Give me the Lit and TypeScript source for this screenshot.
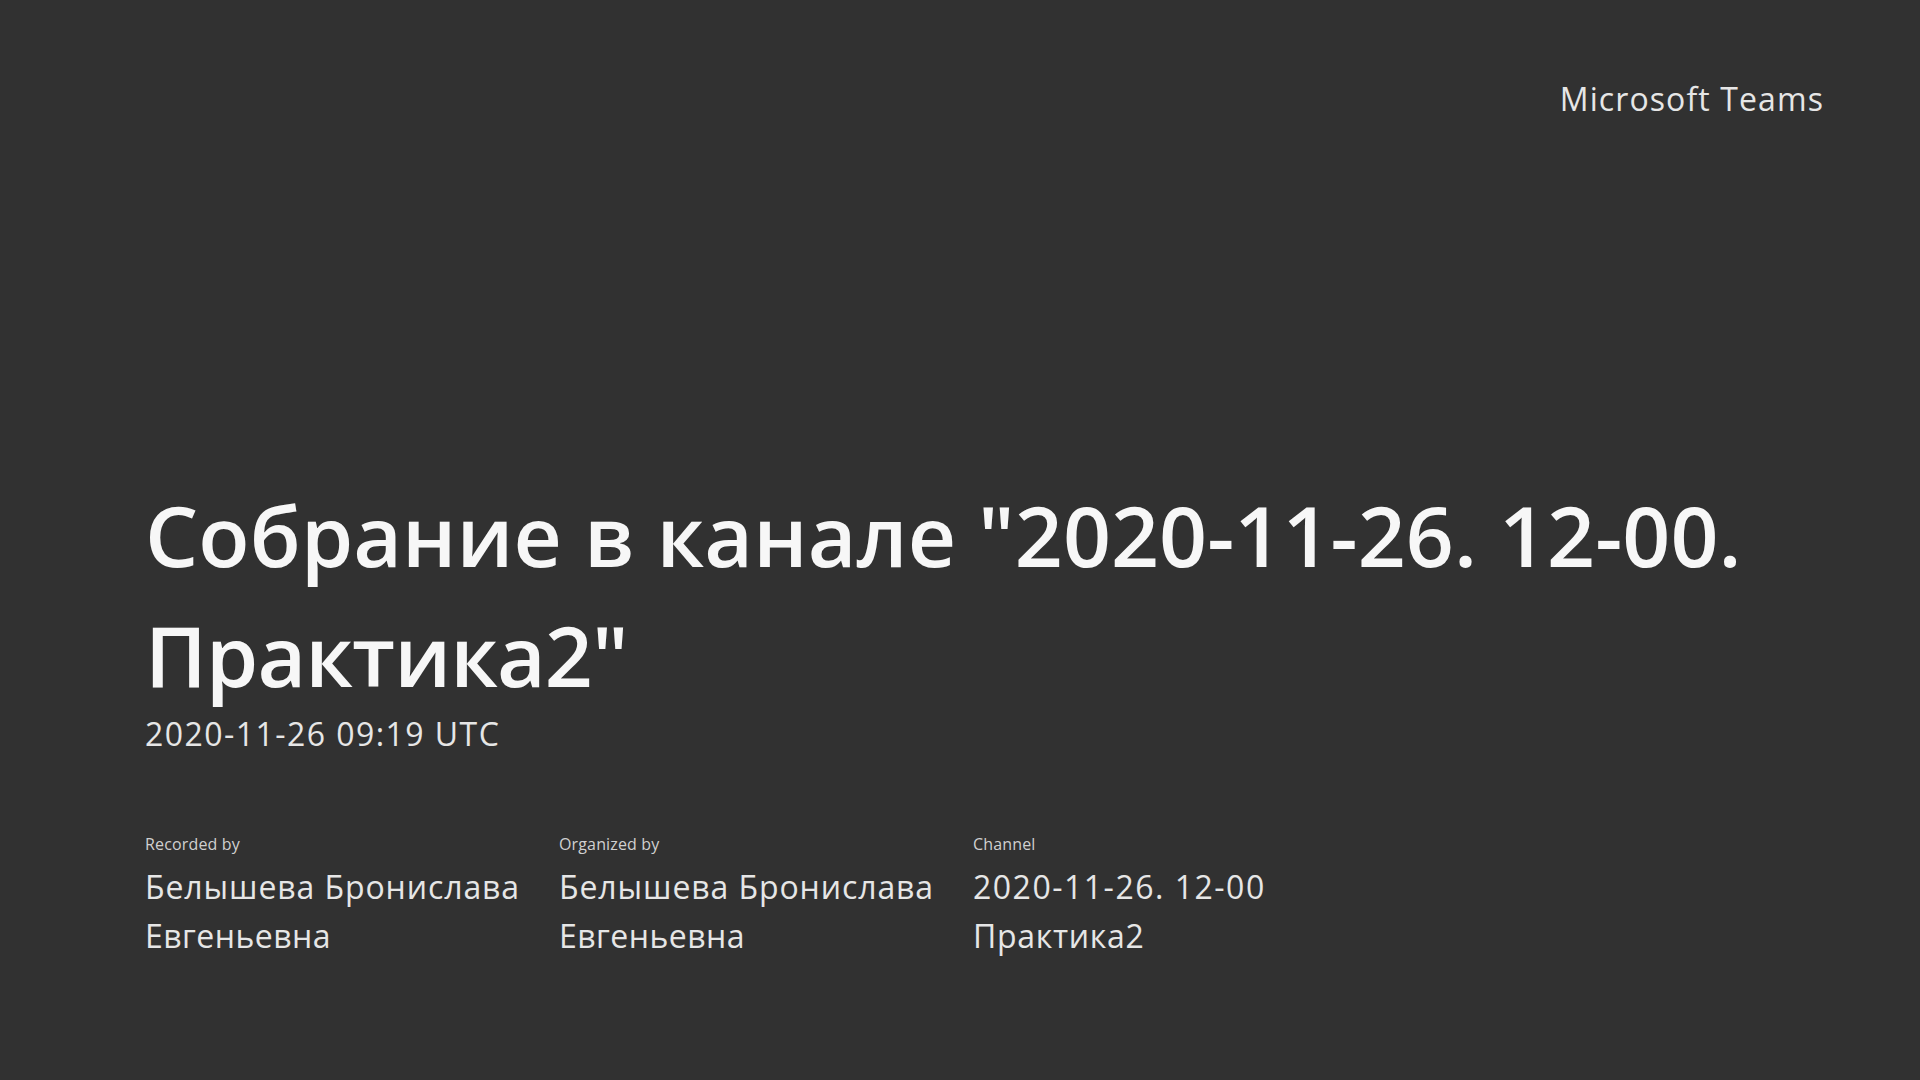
import { LitElement, html, css } from "lit";
import { customElement } from "lit/decorators.js";

const FAMILY = css`"Open Sans", "Noto Sans", sans-serif`;

@customElement("app-root")
export class AppRoot extends LitElement {
  static styles = css`
    :host {
      display: flex;
      flex-direction: column;
      justify-content: space-between;
      box-sizing: border-box;
      width: 1920px;
      height: 1080px;
      padding: 76px 96px 120px 145px;
      background: #313131;
      color: #f5f5f5;
      font-family: ${FAMILY};
      overflow: hidden;
    }
    .brand { align-self: flex-end; font-size: 32px; letter-spacing: 1.1px; line-height: 46px; color: #e6e6e6; }
    .main { display: flex; flex-direction: column; }
    h1 { margin: 0; font-size: 84px; font-weight: 600; letter-spacing: 0.09px; line-height: 120px; color: #f7f7f7; }
    .tail { letter-spacing: -0.9px; }
    .date { font-size: 32px; letter-spacing: 1.45px; line-height: 44px; color: #e6e6e6; margin-top: -3px; margin-bottom: 76px; }
    .meta { display: grid; grid-template-columns: repeat(3, 414px); }
    .cell { width: 384px; }
    .label { font-size: 16px; letter-spacing: 0.15px; line-height: 24px; color: #d0d0d0; margin-bottom: 6px; }
    .value { font-size: 32px; letter-spacing: 0.7px; line-height: 49px; color: #e6e6e6; }
    .wide { letter-spacing: 0.9px; }
    .narrow { letter-spacing: 0.45px; }
    .digits { letter-spacing: 1.5px; }
  `;

  render() {
    const name = html`<span class="wide">Белышева Бронислава</span> <span class="narrow">Евгеньевна</span>`;
    return html`
      <div class="brand">Microsoft Teams</div>
      <div class="main">
        <h1>Собрание в канале "2020-11-26. 12-00. <span class="tail">Практика2"</span></h1>
        <div class="date">2020-11-26 09:19 UTC</div>
        <div class="meta">
          <div class="cell"><div class="label">Recorded by</div><div class="value">${name}</div></div>
          <div class="cell"><div class="label">Organized by</div><div class="value">${name}</div></div>
          <div class="cell"><div class="label">Channel</div><div class="value"><span class="digits">2020-11-26. 12-00</span> Практика2</div></div>
        </div>
      </div>
    `;
  }
}
